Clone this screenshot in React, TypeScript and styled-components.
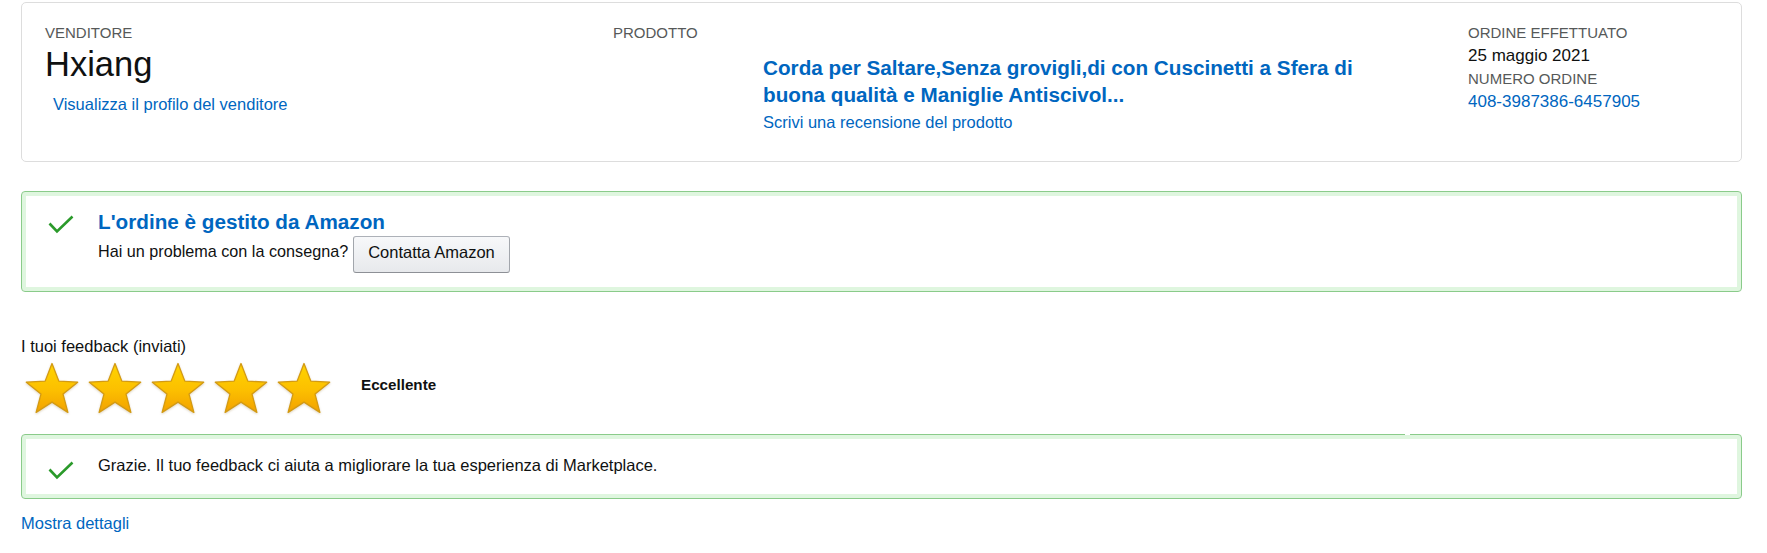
import React from "react";
import styled, { createGlobalStyle } from "styled-components";

const Global = createGlobalStyle`
  html, body { margin: 0; padding: 0; background: #ffffff; }
  body {
    font-family: "Liberation Sans", Arial, sans-serif;
    color: #0f1111;
    font-size: 16.5px;
    line-height: 23px;
  }
`;

const Page = styled.div`
  padding: 2px 25px 30px 21px;
`;

const Card = styled.section`
  border: 1px solid #dddddd;
  border-radius: 5px;
  padding: 18px 0 27px 23px;
  display: grid;
  grid-template-columns: 568px 855px 1fr;
`;

const Column = styled.div`
  display: flex;
  flex-direction: column;
  align-items: flex-start;
`;

const Label = styled.div`
  font-size: 15px;
  line-height: 23px;
  color: #565959;
`;

const SellerName = styled.div`
  font-size: 34.5px;
  line-height: 40px;
  color: #0f1111;
`;

const Link = styled.a<{ $size?: number; $bold?: boolean }>`
  color: #0066c0;
  text-decoration: none;
  font-size: ${(p) => p.$size ?? 16.5}px;
  font-weight: ${(p) => (p.$bold ? 700 : 400)};
  cursor: pointer;
`;

const SellerLink = styled(Link)`
  display: block;
  margin: 9px 0 0 8px;
`;

const ProductBody = styled.div`
  display: flex;
  flex-direction: column;
  align-items: flex-start;
  padding-left: 150px;
  margin-top: 10px;
`;

const ProductTitle = styled(Link)`
  display: block;
  max-width: 630px;
  line-height: 27px;
`;

const ReviewLink = styled(Link)`
  display: block;
  margin-top: 3px;
`;

const OrderValue = styled.div`
  font-size: 17px;
  line-height: 23px;
  color: #0f1111;
`;

const OrderLink = styled(Link)`
  display: block;
  line-height: 23px;
`;

const AlertBox = styled.div<{ $top: number; $pt: number; $pb: number; $notch?: boolean }>`
  position: relative;
  margin-top: ${(p) => p.$top}px;
  border: 1px solid #8acb8a;
  border-radius: 4px;
  box-shadow: inset 0 0 0 4px #dff6df;
  padding: ${(p) => p.$pt}px 20px ${(p) => p.$pb}px 26px;
  display: flex;
  align-items: flex-start;
  &::after {
    content: "";
    display: ${(p) => (p.$notch ? "block" : "none")};
    position: absolute;
    top: -1px;
    left: 1383px;
    width: 5px;
    height: 1px;
    background: #ffffff;
  }
`;

const IconCell = styled.div`
  width: 50px;
  flex: none;
  padding-top: 7px;
  display: flex;
`;

const AlertBody = styled.div`
  display: flex;
  flex-direction: column;
`;

const AlertTitle = styled.div`
  font-size: 20.7px;
  font-weight: 700;
  line-height: 27px;
  color: #0066c0;
`;

const AlertRow = styled.div`
  display: flex;
  align-items: flex-start;
  margin-top: 1px;
`;

const RowText = styled.span<{ $offset?: number; $size?: number }>`
  margin-top: ${(p) => p.$offset ?? 0}px;
  font-size: ${(p) => p.$size ?? 16.5}px;
  line-height: 23px;
`;

const Button = styled.button`
  margin-left: 5px;
  height: 37px;
  box-sizing: border-box;
  padding: 0 14px 4px;
  border: 1px solid;
  border-color: #adb1b8 #a2a6ac #8d9096;
  border-radius: 3px;
  background: linear-gradient(to bottom, #f7f8fa, #e7e9ec);
  font-family: "Liberation Sans", Arial, sans-serif;
  font-size: 16.5px;
  line-height: 31px;
  color: #0f1111;
  cursor: pointer;
`;

const FeedbackHeading = styled.div`
  margin-top: 43px;
  font-size: 16.5px;
  line-height: 23px;
`;

const StarRow = styled.div`
  display: flex;
  align-items: flex-start;
  gap: 7px;
  margin-top: 4px;
  padding-left: 3px;
`;

const StarSvg = styled.svg`
  display: block;
  filter: drop-shadow(0 1px 1px rgba(120, 80, 0, 0.25));
`;

const Rating = styled.div`
  margin: 13px 0 0 22px;
  font-size: 15.2px;
  line-height: 20px;
  font-weight: 700;
  color: #0f1111;
`;

const Details = styled(Link)`
  display: block;
  margin-top: 13px;
  line-height: 23px;
`;

const Check = () => (
  <svg width="26" height="19" viewBox="0 0 26 19" aria-hidden="true">
    <polyline
      points="1.5,8.5 9,16.5 24.5,1.5"
      fill="none"
      stroke="#2b9a2b"
      strokeWidth="2.6"
      strokeLinejoin="miter"
    />
  </svg>
);

const starPoints = (() => {
  const cx = 28;
  const cy = 28.5;
  const R = 27;
  const r = 11.6;
  const pts: string[] = [];
  for (let i = 0; i < 10; i++) {
    const a = ((-90 + i * 36) * Math.PI) / 180;
    const rad = i % 2 === 0 ? R : r;
    pts.push(`${(cx + rad * Math.cos(a)).toFixed(2)},${(cy + rad * Math.sin(a)).toFixed(2)}`);
  }
  return pts.join(" ");
})();

const Star = ({ id }: { id: string }) => (
  <StarSvg width="56" height="52" viewBox="0 0 56 52" aria-hidden="true">
    <defs>
      <linearGradient id={id} x1="0" y1="0" x2="0" y2="1">
        <stop offset="0" stopColor="#ffd400" />
        <stop offset="0.55" stopColor="#fcbf00" />
        <stop offset="1" stopColor="#f2a100" />
      </linearGradient>
    </defs>
    <polygon points={starPoints} fill={`url(#${id})`} stroke="#d39a12" strokeWidth="1.3" strokeLinejoin="round" />
  </StarSvg>
);

export default function App() {
  return (
    <>
      <Global />
      <Page>
        <Card>
          <Column>
            <Label>VENDITORE</Label>
            <SellerName>Hxiang</SellerName>
            <SellerLink>Visualizza il profilo del venditore</SellerLink>
          </Column>
          <Column>
            <Label>PRODOTTO</Label>
            <ProductBody>
              <ProductTitle $size={20.7} $bold>
                Corda per Saltare,Senza grovigli,di con Cuscinetti a Sfera di buona qualità e Maniglie Antiscivol...
              </ProductTitle>
              <ReviewLink>Scrivi una recensione del prodotto</ReviewLink>
            </ProductBody>
          </Column>
          <Column>
            <Label>ORDINE EFFETTUATO</Label>
            <OrderValue>25 maggio 2021</OrderValue>
            <Label>NUMERO ORDINE</Label>
            <OrderLink $size={17}>408-3987386-6457905</OrderLink>
          </Column>
        </Card>

        <AlertBox $top={29} $pt={16} $pb={18}>
          <IconCell>
            <Check />
          </IconCell>
          <AlertBody>
            <AlertTitle>L'ordine è gestito da Amazon</AlertTitle>
            <AlertRow>
              <RowText $offset={4} $size={16.2}>Hai un problema con la consegna?</RowText>
              <Button>Contatta Amazon</Button>
            </AlertRow>
          </AlertBody>
        </AlertBox>

        <FeedbackHeading>I tuoi feedback (inviati)</FeedbackHeading>
        <StarRow>
          {[0, 1, 2, 3, 4].map((i) => (
            <Star key={i} id={`starGrad${i}`} />
          ))}
          <Rating>Eccellente</Rating>
        </StarRow>

        <AlertBox $top={20} $pt={19} $pb={18} $notch>
          <IconCell>
            <Check />
          </IconCell>
          <RowText>Grazie. Il tuo feedback ci aiuta a migliorare la tua esperienza di Marketplace.</RowText>
        </AlertBox>

        <Details>Mostra dettagli</Details>
      </Page>
    </>
  );
}
